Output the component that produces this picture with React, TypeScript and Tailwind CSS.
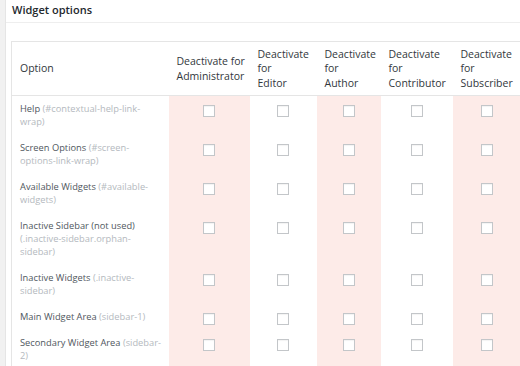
import React from "react";

type Line = { a?: string; b?: string };
const rows: Line[][] = [
  [{ a: "Help ", b: "(#contextual-help-link-" }, { b: "wrap)" }],
  [{ a: "Screen Options ", b: "(#screen-" }, { b: "options-link-wrap)" }],
  [{ a: "Available Widgets ", b: "(#available-" }, { b: "widgets)" }],
  [{ a: "Inactive Sidebar (not used)" }, { b: "(.inactive-sidebar.orphan-" }, { b: "sidebar)" }],
  [{ a: "Inactive Widgets ", b: "(.inactive-" }, { b: "sidebar)" }],
  [{ a: "Main Widget Area ", b: "(sidebar-1)" }],
  [{ a: "Secondary Widget Area ", b: "(sidebar-" }, { b: "2)" }],
];

const cols = [
  { lines: ["Deactivate for", "Administrator"], w: "w-[81px]", pink: true },
  { lines: ["Deactivate", "for", "Editor"], w: "w-[67px]", pink: false },
  { lines: ["Deactivate", "for", "Author"], w: "w-[64px]", pink: true },
  { lines: ["Deactivate", "for", "Contributor"], w: "w-[72px]", pink: false },
  { lines: ["Deactivate", "for", "Subscriber"], w: "w-[70px]", pink: true },
];

function Box() {
  return <span className="block w-[12px] h-[12px] border border-[#c3c6c9] bg-white mx-auto shadow-[inset_0_1px_1px_rgba(0,0,0,0.05)]" />;
}

export default function App() {
  return (
    <div className="w-[520px] h-[366px] overflow-hidden bg-[#f1f1f1] pl-[5px]" style={{ fontFamily: '"Open Sans", sans-serif' }}>
      <div className="bg-white border-l border-[#e5e5e5] h-full w-[600px]">
        <div className="h-[23px] border-b border-[#eeeeee] pl-[6px] pt-[2px] text-[11px] font-semibold text-[#23282d] leading-[16px]">
          Widget options
        </div>
        <div className="pl-[5px] pt-[18px]">
          <table className="border-collapse border border-[#e5e5e5] table-fixed" style={{ width: 511 }}>
            <thead>
              <tr className="border-b border-[#e5e5e5]">
                <th className="w-[157px] text-left font-normal text-[10.5px] leading-[14.5px] text-[#32373c] pl-[8px] h-[54px] align-middle">
                  Option
                </th>
                {cols.map((c) => (
                  <th key={c.lines.join(" ")} className={`${c.w} text-left font-normal text-[10.5px] leading-[14.5px] text-[#32373c] pl-[8px] align-middle whitespace-nowrap`}>
                    {c.lines.map((l, i) => (
                      <span key={i} className="block">
                        {l}
                      </span>
                    ))}
                  </th>
                ))}
              </tr>
            </thead>
            <tbody>
              {rows.map((r, ri) => (
                <tr key={ri}>
                  <td className="pl-[8px] pr-[5px] pt-[6px] pb-[7px] align-top text-[9.3px] leading-[13px] text-[#50575e]">
                    {r.map((l, li) => (
                      <span key={li} className="block whitespace-nowrap">
                        {l.a}
                        {l.b && <span className="text-[#b4b9be]">{l.b}</span>}
                      </span>
                    ))}
                  </td>
                  {cols.map((c) => (
                    <td key={c.lines.join(" ")} className={`${c.pink ? "bg-[#fdebe8]" : "bg-white"} align-top pt-[9px]`}>
                      <Box />
                    </td>
                  ))}
                </tr>
              ))}
            </tbody>
          </table>
        </div>
      </div>
    </div>
  );
}
